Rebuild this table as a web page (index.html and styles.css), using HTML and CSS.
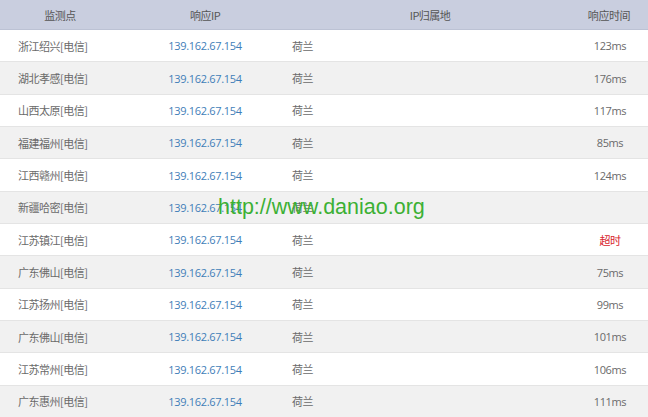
FILE: index.html
```html
<!DOCTYPE html>
<html lang="zh">
<head>
<meta charset="utf-8">
<link rel="stylesheet" href="styles.css">
</head>
<body>
<div class="table">
  <div class="row head">
    <div class="c1">监测点</div><div class="c2">响应IP</div><div class="c3">IP归属地</div><div class="c4">响应时间</div>
  </div>
  <div class="row"><div class="c1">浙江绍兴[电信]</div><div class="c2 ip">139.162.67.154</div><div class="c3">荷兰</div><div class="c4">123ms</div></div>
  <div class="row alt"><div class="c1">湖北孝感[电信]</div><div class="c2 ip">139.162.67.154</div><div class="c3">荷兰</div><div class="c4">176ms</div></div>
  <div class="row"><div class="c1">山西太原[电信]</div><div class="c2 ip">139.162.67.154</div><div class="c3">荷兰</div><div class="c4">117ms</div></div>
  <div class="row alt"><div class="c1">福建福州[电信]</div><div class="c2 ip">139.162.67.154</div><div class="c3">荷兰</div><div class="c4">85ms</div></div>
  <div class="row"><div class="c1">江西赣州[电信]</div><div class="c2 ip">139.162.67.154</div><div class="c3">荷兰</div><div class="c4">124ms</div></div>
  <div class="row alt"><div class="c1">新疆哈密[电信]</div><div class="c2 ip">139.162.67.154</div><div class="c3">荷兰</div><div class="c4"></div></div>
  <div class="row"><div class="c1">江苏镇江[电信]</div><div class="c2 ip">139.162.67.154</div><div class="c3">荷兰</div><div class="c4 timeout">超时</div></div>
  <div class="row alt"><div class="c1">广东佛山[电信]</div><div class="c2 ip">139.162.67.154</div><div class="c3">荷兰</div><div class="c4">75ms</div></div>
  <div class="row"><div class="c1">江苏扬州[电信]</div><div class="c2 ip">139.162.67.154</div><div class="c3">荷兰</div><div class="c4">99ms</div></div>
  <div class="row alt"><div class="c1">广东佛山[电信]</div><div class="c2 ip">139.162.67.154</div><div class="c3">荷兰</div><div class="c4">101ms</div></div>
  <div class="row"><div class="c1">江苏常州[电信]</div><div class="c2 ip">139.162.67.154</div><div class="c3">荷兰</div><div class="c4">106ms</div></div>
  <div class="row alt"><div class="c1">广东惠州[电信]</div><div class="c2 ip">139.162.67.154</div><div class="c3">荷兰</div><div class="c4">111ms</div></div>
  <div class="watermark">http://www.daniao.org</div>
</div>
</body>
</html>
```

FILE: styles.css
```css
html, body {
  margin: 0;
  padding: 0;
  background: #ffffff;
}
body {
  font-family: "Noto Sans CJK SC", "Open Sans", sans-serif;
  font-size: 11px;
  letter-spacing: -0.5px;
  color: #6a6a6a;
  width: 648px;
  height: 417px;
  overflow: hidden;
}
.table {
  position: relative;
  width: 648px;
}
.row {
  display: grid;
  grid-template-columns: 120px 170px 280px 78px;
  height: 31.35px;
  align-items: center;
  border-bottom: 1px solid #e4e4e4;
  background: #ffffff;
}
.row.alt {
  background: #f1f1f1;
}
.row.head {
  height: 29px;
  background: #c9cedf;
  color: #555555;
  border-bottom: 1px solid #bcc2d4;
}
.row.head > div {
  text-align: center;
  padding-left: 0;
}
.c1 {
  padding-left: 18px;
}
.c2 {
  text-align: center;
}
.ip {
  color: #3f7eb8;
  font-family: "Open Sans", "Noto Sans", sans-serif;
  letter-spacing: -0.3px;
}
.c3 {
  padding-left: 2px;
}
.c4 {
  text-align: center;
  padding-left: 2px;
  font-family: "Open Sans", "Noto Sans CJK SC", sans-serif;
  letter-spacing: -0.4px;
}
.timeout {
  color: #d8232b;
  font-family: "Noto Sans CJK SC", sans-serif;
}
.watermark {
  position: absolute;
  left: 218px;
  top: 192px;
  font-family: "Liberation Sans", Arial, sans-serif;
  font-size: 21.5px;
  letter-spacing: 0;
  color: #3cb034;
  line-height: 30px;
  white-space: nowrap;
}
```
